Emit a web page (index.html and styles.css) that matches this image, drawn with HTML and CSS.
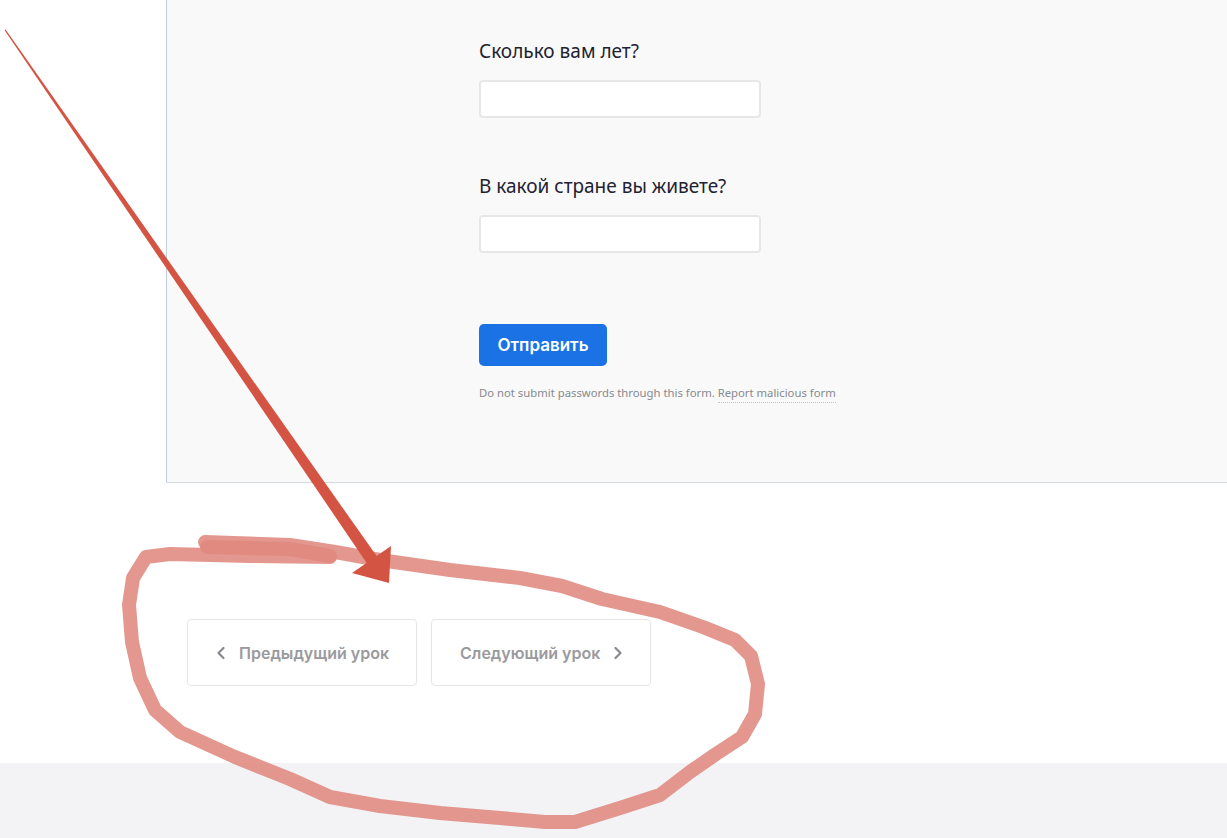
FILE: index.html
```html
<!DOCTYPE html>
<html lang="ru">
<head>
<meta charset="utf-8">
<title>Урок</title>
<link rel="stylesheet" href="styles.css">
</head>
<body>
<div class="page">
  <section class="panel">
    <form class="form">
      <div class="field">
        <label class="label">Сколько вам лет?</label>
        <input class="input" type="text">
      </div>
      <div class="field">
        <label class="label">В какой стране вы живете?</label>
        <input class="input" type="text">
      </div>
      <button class="submit" type="button">Отправить</button>
      <p class="note">Do not submit passwords through this form. <a class="report">Report malicious form</a></p>
    </form>
  </section>
  <nav class="lesson-nav">
    <a class="nav-btn">
      <svg class="chev" width="10" height="14" viewBox="0 0 10 14"><path d="M7.5 2 L2.5 7 L7.5 12" fill="none" stroke="#8a8a8e" stroke-width="2.2" stroke-linecap="round" stroke-linejoin="round"/></svg>
      <span>Предыдущий урок</span>
    </a>
    <a class="nav-btn">
      <span>Следующий урок</span>
      <svg class="chev" width="10" height="14" viewBox="0 0 10 14"><path d="M2.5 2 L7.5 7 L2.5 12" fill="none" stroke="#8a8a8e" stroke-width="2.2" stroke-linecap="round" stroke-linejoin="round"/></svg>
    </a>
  </nav>
  <footer class="footer"></footer>
</div>
<svg class="annot" width="1227" height="838" viewBox="0 0 1227 838">
  <g fill="none" stroke="#e0897e" stroke-opacity="0.88" stroke-width="14" stroke-linecap="round" stroke-linejoin="round">
    <path d="M330,557 L250,556 L170,554 L146,557 L133,578 L129,605 L132,642 L140,678 L155,710 L180,732 L235,757 L290,779 L330,797 L380,806 L440,813 L500,818 L545,822 L575,822 L620,808 L660,795 L690,772 L716,754 L742,737 L755,714 L758,684 L751,656 L735,640 L703,627 L660,612 L602,599 L562,586 L520,578 L450,570 L380,560 L335,552 L290,545 L205,542"/>
    <path d="M207,547 L290,549 L330,556"/>
  </g>
  <polygon fill="#d45444" points="4.6,30.3 5.6,29.6 377,556.6 367,563.4"/>
  <polygon fill="#d45444" points="391,546 352,573 389,583"/>
</svg>
</body>
</html>
```
FILE: styles.css
```css
html, body {
  margin: 0;
  padding: 0;
  background: #ffffff;
}

body {
  font-family: "Noto Sans", "Open Sans", sans-serif;
  color: #202124;
}

.page {
  display: flex;
  flex-direction: column;
  min-height: 838px;
}

.panel {
  margin-left: 166px;
  background: #f9f9f9;
  border-left: 1px solid #c3d1df;
  border-bottom: 1px solid #d6dbe0;
  padding: 38px 0 81px 312px;
}

.form {
  display: flex;
  flex-direction: column;
  align-items: flex-start;
  width: 282px;
}

.field {
  display: flex;
  flex-direction: column;
  margin-bottom: 55px;
  width: 100%;
}

.field + .field {
  margin-bottom: 71px;
}

.label {
  font-size: 19px;
  line-height: 26px;
  color: #1f2230;
  margin-bottom: 16px;
}

.input {
  box-sizing: border-box;
  width: 282px;
  height: 38px;
  border: 2px solid #e6e7e8;
  border-radius: 4px;
  background: #ffffff;
  margin: 0;
}

.submit {
  box-sizing: border-box;
  height: 42px;
  width: 128px;
  border: none;
  border-radius: 5px;
  background: #1a72e5;
  color: #ffffff;
  font-family: "Inter", "Noto Sans", sans-serif;
  font-size: 17px;
  font-weight: 600;
  padding: 0;
}

.note {
  margin: 19px 0 0;
  font-size: 11.3px;
  line-height: 16px;
  color: #878a8f;
  white-space: nowrap;
}

.report {
  border-bottom: 1px dotted #c4c6c9;
  padding-bottom: 2px;
}

.lesson-nav {
  display: flex;
  gap: 14px;
  margin: 136px 0 0 187px;
}

.nav-btn {
  box-sizing: border-box;
  display: flex;
  align-items: center;
  gap: 13px;
  height: 67px;
  padding: 0 27px 0 28px;
  border: 1px solid #e6e6e8;
  border-radius: 4px;
  background: #ffffff;
  color: #9a9a9e;
  font-family: "Inter", "Noto Sans", sans-serif;
  font-size: 16px;
  font-weight: 600;
}

.chev {
  display: block;
  flex: none;
}

.footer {
  margin-top: 77px;
  flex: 1;
  background: #f3f3f5;
}

.annot {
  position: absolute;
  top: 0;
  left: 0;
  pointer-events: none;
}
```
